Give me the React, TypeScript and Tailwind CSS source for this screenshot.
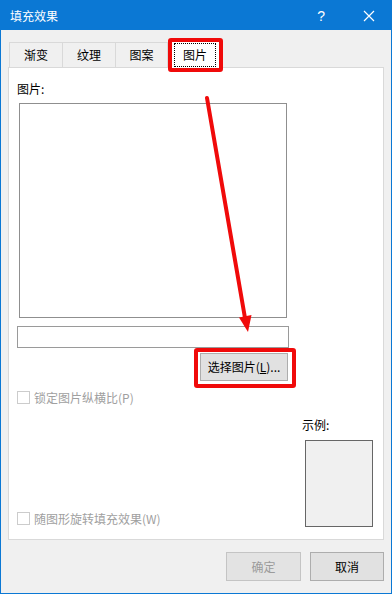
import React from "react";

const font = "font-['Noto_Sans_CJK_SC',sans-serif]";

function Tab({ label, last }: { label: string; last?: boolean }) {
  return (
    <div
      className={`w-[53px] h-[25px] flex items-center justify-center border-t border-l border-[#d9d9d9] text-[12px] leading-[16px] text-black ${
        last ? "border-r" : ""
      }`}
    >
      {label}
    </div>
  );
}

function DisabledCheck({ label }: { label: string }) {
  return (
    <div className="flex items-center gap-[4px] h-[13px]">
      <div className="w-[13px] h-[13px] border border-[#cccccc] bg-white" />
      <span className="text-[12px] leading-[16px] text-[#a0a0a0]">{label}</span>
    </div>
  );
}

export default function App() {
  return (
    <div
      className={`relative w-[392px] h-[594px] bg-[#f0f0f0] border border-[#0b78d4] flex flex-col ${font}`}
    >
      {/* Title bar */}
      <div className="h-[29px] bg-[#0b78d4] flex items-center text-white">
        <span className="ml-[9px] text-[12px] leading-[16px]">填充效果</span>
        <span className="ml-auto mr-[38px] text-[14px] leading-[16px] font-['Liberation_Sans',sans-serif] font-light">
          ?
        </span>
        <svg width="12" height="12" viewBox="0 0 12 12" className="mr-[16px]">
          <path d="M1 1 L11 11 M11 1 L1 11" stroke="white" strokeWidth="1.2" />
        </svg>
      </div>

      {/* Tabs */}
      <div className="h-[37px] flex items-end pl-[8px]">
        <Tab label="渐变" />
        <Tab label="纹理" />
        <Tab label="图案" last />
        <div className="relative z-10 ml-[2px] -mb-px w-[50px] h-[28px] bg-white border border-b-0 border-[#d9d9d9] flex items-center justify-center">
          <div className="absolute left-[3px] right-[3px] top-[2px] bottom-[1px] border border-dotted border-black" />
          <span className="text-[12px] leading-[16px] text-black">图片</span>
          <div className="absolute -left-[3px] -right-[4px] -top-[3px] -bottom-[4px] border-[4px] border-[#f00a0a] rounded-[3px]" />
        </div>
      </div>

      {/* Panel */}
      <div className="ml-[7px] w-[376px] h-[473px] bg-white border border-[#d9d9d9] flex flex-col pl-[8px]">
        <div className="pt-[13px] text-[12px] leading-[16px] text-black">图片:</div>
        <div className="mt-[6px] ml-[2px] w-[268px] h-[215px] border border-[#8f8f8f] bg-white" />
        <div className="mt-[8px] w-[272px] h-[22px] border border-[#9a9a9a] bg-white" />
        <div className="relative mt-[5px] ml-[183px] w-[88px] h-[28px]">
          <div className="w-full h-full bg-[#e1e1e1] border border-[#adadad] flex items-center justify-center text-[12px] leading-[16px] text-black">
            选择图片(<span className="underline">L</span>)...
          </div>
          <div className="absolute -left-[6px] -right-[8px] -top-[5px] -bottom-[7px] border-[4px] border-[#f00a0a] rounded-[3px]" />
        </div>
        <div className="mt-[10px]">
          <DisabledCheck label="锁定图片纵横比(P)" />
        </div>
        <div className="flex-1 flex">
          <div className="flex-1 flex flex-col justify-end pb-[14px]">
            <DisabledCheck label="随图形旋转填充效果(W)" />
          </div>
          <div className="w-[71px] mr-[10px] pt-[13px] flex flex-col">
            <div className="text-[12px] leading-[16px] text-black">示例:</div>
            <div className="mt-[7px] ml-[3px] w-[68px] h-[87px] bg-[#f0f0f0] border border-[#666666]" />
          </div>
        </div>
      </div>

      {/* Footer buttons */}
      <div className="mt-[12px] ml-[225px] flex gap-[9px]">
        <div className="w-[75px] h-[29px] bg-[#e3e3e3] border border-[#c4c4c4] flex items-center justify-center text-[12px] leading-[16px] text-[#9b9b9b]">
          确定
        </div>
        <div className="w-[74px] h-[29px] bg-[#e1e1e1] border border-[#adadad] flex items-center justify-center text-[12px] leading-[16px] text-black">
          取消
        </div>
      </div>

      {/* Red arrow annotation */}
      <svg
        className="absolute -left-px -top-px pointer-events-none"
        width="392"
        height="594"
        viewBox="0 0 392 594"
      >
        <line x1="207" y1="98" x2="245" y2="318" stroke="#f00a0a" strokeWidth="4" strokeLinecap="round" />
        <polygon points="248,332 251.5,315 239,317.5" fill="#f00a0a" />
      </svg>
    </div>
  );
}
